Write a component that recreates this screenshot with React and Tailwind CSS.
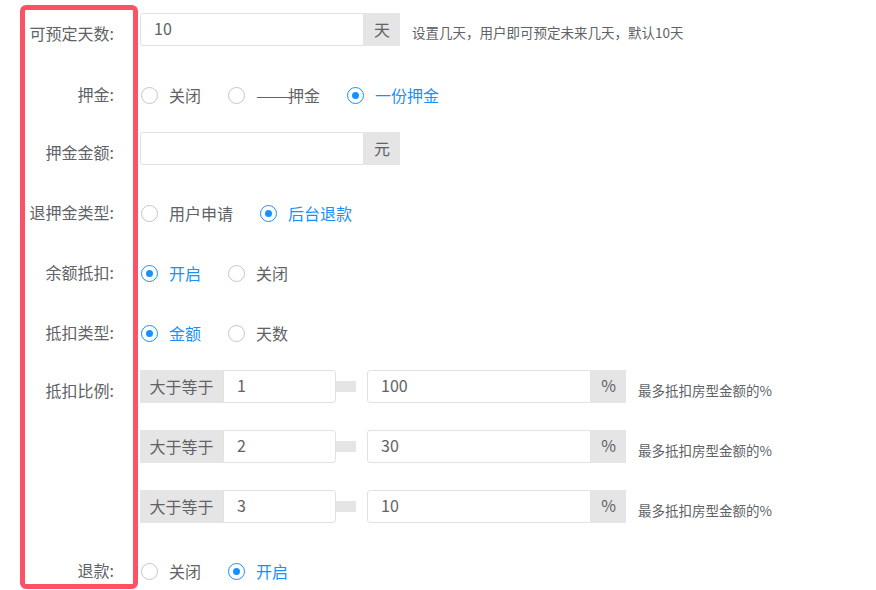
const rows = [
  { label: '可预定天数:', mt: 'mt-0', shift: true },
  { label: '押金:', mt: 'mt-[33px]' },
  { label: '押金金额:', mt: 'mt-[20px]', shift: true },
  { label: '退押金类型:', mt: 'mt-[32px]' },
  { label: '余额抵扣:', mt: 'mt-[27px]' },
  { label: '抵扣类型:', mt: 'mt-[27px]' },
  { label: '抵扣比例:', mt: 'mt-[20px]', shift: true },
  { label: '', mt: 'mt-[27px]' },
  { label: '', mt: 'mt-[27px]' },
  { label: '退款:', mt: 'mt-[32px]' },
]

function Radio({ text, checked, dash }) {
  return (
    <div className="flex items-center mr-[27px]">
      {checked ? (
        <span className="w-[17px] h-[17px] shrink-0 rounded-full border-[1.5px] border-[#1890ff] bg-white flex items-center justify-center">
          <span className="w-[7px] h-[7px] rounded-full bg-[#1890ff]"></span>
        </span>
      ) : (
        <span className="w-[17px] h-[17px] shrink-0 rounded-full border-[1.5px] border-[#c6c6c6] bg-white"></span>
      )}
      <span className={'ml-[11px] leading-none pb-[1px] text-[16px] flex items-center ' + (checked ? 'text-[#1890ff]' : 'text-[#606266]')}>
        {dash && (
          <span className="inline-block w-[32px] whitespace-nowrap">
            <span className="inline-block scale-x-[1.28] origin-left">——</span>
          </span>
        )}
        {text}
      </span>
    </div>
  )
}

function InputAddon({ value, unit, help }) {
  return (
    <div className="flex items-center h-[33px]">
      <div className="w-[224px] h-full border border-[#e2e2e2] rounded-l-[3px] px-[13px] pb-[3px] flex items-center text-[16px] text-[#606266]">
        {value}
      </div>
      <div className="w-[36px] h-full bg-[#e5e5e5] pb-[2px] flex items-center justify-center text-[16px] text-[#606266]">
        {unit}
      </div>
      {help && <span className="ml-3 mt-[6px] text-[13.5px] text-[#606266]">{help}</span>}
    </div>
  )
}

function RateRow({ min, pct }) {
  return (
    <div className="flex items-center h-[33px]">
      <div className="w-[83px] h-full bg-[#e5e5e5] pb-[2px] flex items-center justify-center text-[16px] text-[#606266]">
        大于等于
      </div>
      <div className="w-[113px] h-full border border-[#e2e2e2] rounded-r-[3px] px-[13px] pb-[3px] flex items-center text-[16px] text-[#606266]">
        {min}
      </div>
      <div className="w-[20px] h-[11px] bg-[#e5e5e5]"></div>
      <div className="ml-[11px] w-[224px] h-full border border-[#e2e2e2] rounded-l-[3px] px-[13px] pb-[3px] flex items-center text-[16px] text-[#606266]">
        {pct}
      </div>
      <div className="w-[35px] h-full bg-[#e5e5e5] pb-[3px] flex items-center justify-center text-[16px] text-[#606266]">
        %
      </div>
      <span className="ml-3 mt-[8px] text-[13.5px] text-[#606266]">最多抵扣房型金额的%</span>
    </div>
  )
}

export default function App() {
  const controls = [
    <InputAddon value="10" unit="天" help="设置几天，用户即可预定未来几天，默认10天" />,
    <div className="flex items-center h-[33px] pl-px">
      <Radio text="关闭" />
      <Radio text="押金" dash />
      <Radio text="一份押金" checked />
    </div>,
    <InputAddon value="" unit="元" />,
    <div className="flex items-center h-[33px] pl-px">
      <Radio text="用户申请" />
      <Radio text="后台退款" checked />
    </div>,
    <div className="flex items-center h-[33px] pl-px">
      <Radio text="开启" checked />
      <Radio text="关闭" />
    </div>,
    <div className="flex items-center h-[33px] pl-px">
      <Radio text="金额" checked />
      <Radio text="天数" />
    </div>,
    <RateRow min="1" pct="100" />,
    <RateRow min="2" pct="30" />,
    <RateRow min="3" pct="10" />,
    <div className="flex items-center h-[33px] pl-px">
      <Radio text="关闭" />
      <Radio text="开启" checked />
    </div>,
  ]

  return (
    <div className="min-h-screen bg-white flex items-start pl-[20px] font-['Noto_Sans_CJK_SC',sans-serif]">
      {/* label column with red highlight */}
      <div className="mt-[5px] w-[118px] h-[584px] shrink-0 border-[5px] border-[#fb5266] rounded-[6px] flex flex-col pt-[3px]">
        {rows.map((r, i) => (
          <div
            key={i}
            className={'h-[33px] shrink-0 flex items-center justify-end pr-[19px] text-[16px] text-[#606266] ' + r.mt + (r.shift ? ' pt-[6px]' : ' pb-[3px]')}
          >
            {r.label}
          </div>
        ))}
      </div>

      {/* controls */}
      <div className="ml-[2px] pt-[13px] flex flex-col">
        {controls.map((c, i) => (
          <div key={i} className={rows[i].mt}>
            {c}
          </div>
        ))}
      </div>
    </div>
  )
}
